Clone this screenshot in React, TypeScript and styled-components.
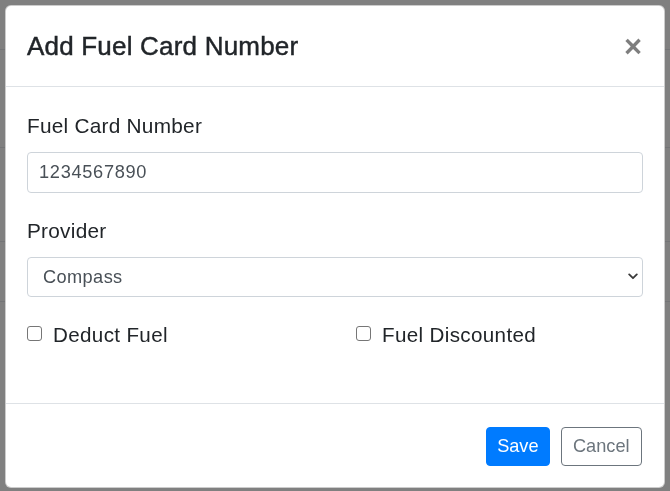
import React, { useState } from 'react'
import styled, { createGlobalStyle } from 'styled-components'

const GlobalStyle = createGlobalStyle`
  html, body {
    margin: 0;
    padding: 0;
    background: #808080;
    font-family: 'Liberation Sans', Arial, Helvetica, sans-serif;
    color: #212529;
  }
  * { box-sizing: border-box; }
`

const providers = ['Compass', 'Shell', 'BP', 'Esso', 'Texaco']

const App: React.FC = () => {
  const [cardNumber, setCardNumber] = useState('1234567890')
  const [provider, setProvider] = useState('Compass')
  const [deduct, setDeduct] = useState(false)
  const [discounted, setDiscounted] = useState(false)

  return (
    <>
      <GlobalStyle />
      <Page>
        <PageRow h={50} />
        <PageRow h={98} />
        <PageRow h={94} />
        <PageRow h={60} />
      </Page>
      <Overlay>
        <Dialog>
          <Header>
            <Title>Add Fuel Card Number</Title>
            <Close aria-label="Close">×</Close>
          </Header>
          <Body>
            <Label htmlFor="card">Fuel Card Number</Label>
            <Input
              id="card"
              value={cardNumber}
              onChange={(e) => setCardNumber(e.target.value)}
            />
            <Label htmlFor="provider" top={22}>Provider</Label>
            <SelectWrap>
              <Select
                id="provider"
                value={provider}
                onChange={(e) => setProvider(e.target.value)}
              >
                {providers.map((p) => (
                  <option key={p}>{p}</option>
                ))}
              </Select>
              <Chevron width="10" height="7" viewBox="0 0 10 7">
                <polyline points="1.2,1.4 5,5.2 8.8,1.4" />
              </Chevron>
            </SelectWrap>
            <Checks>
              <CheckLabel>
                <Check type="checkbox" checked={deduct} onChange={() => setDeduct(!deduct)} />
                Deduct Fuel
              </CheckLabel>
              <CheckLabel>
                <Check type="checkbox" checked={discounted} onChange={() => setDiscounted(!discounted)} />
                Fuel Discounted
              </CheckLabel>
            </Checks>
          </Body>
          <Footer>
            <Button variant="primary">Save</Button>
            <Button variant="outline">Cancel</Button>
          </Footer>
        </Dialog>
      </Overlay>
    </>
  )
}

export default App

const Page = styled.div`
  height: 491px;
  background: #808080;
`

const PageRow = styled.div<{ h: number }>`
  height: ${({ h }) => h}px;
  border-bottom: 1px solid #747577;
`

const Overlay = styled.div`
  position: fixed;
  inset: 0;
  padding: 5px 5px 0 5px;
`

const Dialog = styled.div`
  width: 660px;
  height: 483px;
  background: #fff;
  border: 1px solid rgba(0, 0, 0, 0.2);
  border-radius: 6px;
  display: flex;
  flex-direction: column;
  overflow: hidden;
`

const Header = styled.div`
  height: 81px;
  flex: none;
  display: flex;
  align-items: center;
  justify-content: space-between;
  padding: 0 22px 0 21px;
  border-bottom: 1px solid #dee2e6;
`

const Title = styled.h5`
  margin: 0;
  font-size: 26px;
  line-height: 39px;
  font-weight: 400;
  letter-spacing: 0.2px;
  -webkit-text-stroke: 0.45px #212529;
  color: #212529;
`

const Close = styled.button`
  border: 0;
  background: transparent;
  padding: 0;
  margin: 0;
  font-family: 'Liberation Sans', Arial, sans-serif;
  font-size: 31px;
  font-weight: 700;
  line-height: 1;
  color: #000;
  opacity: 0.5;
  cursor: pointer;
`

const Body = styled.div`
  flex: 1;
  padding: 23px 21px 0 21px;
  display: flex;
  flex-direction: column;
`

const Label = styled.label<{ top?: number }>`
  display: block;
  font-size: 20.8px;
  line-height: 31px;
  letter-spacing: 0.25px;
  margin-top: ${({ top }) => top ?? 0}px;
  margin-bottom: 11px;
  color: #212529;
`

const Input = styled.input`
  display: block;
  width: 100%;
  height: 40.5px;
  padding: 0 11px;
  font-family: 'Liberation Sans', Arial, sans-serif;
  font-size: 18.2px;
  letter-spacing: 0.7px;
  color: #495057;
  background: #fff;
  border: 1px solid #ced4da;
  border-radius: 4px;
  outline: none;
`

const SelectWrap = styled.div`
  position: relative;
`

const Select = styled.select`
  display: block;
  width: 100%;
  height: 40px;
  padding: 0 30px 0 15px;
  font-family: 'Liberation Sans', Arial, sans-serif;
  font-size: 18.2px;
  letter-spacing: 0.4px;
  color: #495057;
  background: #fff;
  border: 1px solid #ced4da;
  border-radius: 4px;
  appearance: none;
  outline: none;
`

const Chevron = styled.svg`
  position: absolute;
  right: 5px;
  top: 16px;
  fill: none;
  stroke: #3a3a3a;
  stroke-width: 1.8;
  stroke-linecap: round;
  stroke-linejoin: round;
  pointer-events: none;
`

const Checks = styled.div`
  display: grid;
  grid-template-columns: 329px 1fr;
  margin-top: 22px;
`

const CheckLabel = styled.label`
  display: flex;
  align-items: center;
  gap: 11px;
  font-size: 20.6px;
  line-height: 31px;
  letter-spacing: 0.35px;
  color: #212529;
`

const Check = styled.input`
  appearance: none;
  width: 15px;
  height: 15px;
  margin: 0 0 2px 0;
  border: 1px solid #767676;
  border-radius: 3px;
  background: #fff;

  &:checked {
    background: #007bff;
    border-color: #007bff;
  }
`

const Footer = styled.div`
  height: 84px;
  flex: none;
  display: flex;
  align-items: center;
  justify-content: flex-end;
  gap: 11px;
  padding: 2px 22px 0 0;
  border-top: 1px solid #dee2e6;
`

const Button = styled.button<{ variant: 'primary' | 'outline' }>`
  height: 39.5px;
  padding: 0 ${({ variant }) => (variant === 'primary' ? '10px' : '11.4px')};
  font-family: 'Liberation Sans', Arial, sans-serif;
  font-size: 18.2px;
  border-radius: 4px;
  cursor: pointer;
  border: 1px solid ${({ variant }) => (variant === 'primary' ? '#007bff' : '#6c757d')};
  background: ${({ variant }) => (variant === 'primary' ? '#007bff' : '#fff')};
  color: ${({ variant }) => (variant === 'primary' ? '#fff' : '#6c757d')};
`
